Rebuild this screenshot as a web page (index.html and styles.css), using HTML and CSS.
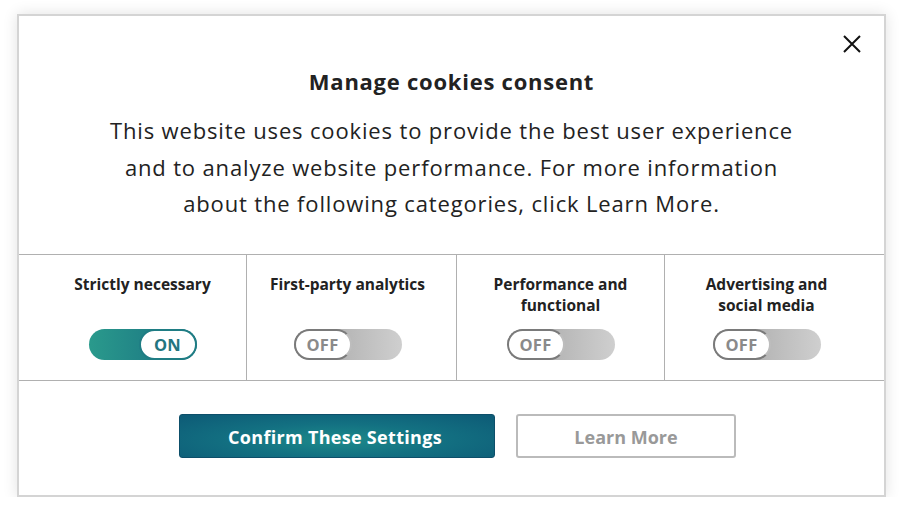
FILE: index.html
```html
<!DOCTYPE html>
<html lang="en">
<head>
<meta charset="utf-8">
<title>Manage cookies consent</title>
<link rel="stylesheet" href="styles.css">
</head>
<body>
<div class="modal">
  <section class="intro">
    <button class="close" aria-label="Close">
      <svg width="20" height="20" viewBox="0 0 20 20"><path d="M2 2 L18 18 M18 2 L2 18" stroke="#111" stroke-width="2" fill="none"/></svg>
    </button>
    <h1 class="title">Manage cookies consent</h1>
    <p class="desc">This website uses cookies to provide the best user experience<br>and to analyze website performance. For more information<br>about the following categories, click Learn More.</p>
  </section>
  <section class="cats">
    <div class="cat cat-1">
      <div class="label">Strictly necessary</div>
      <div class="toggle on"><span class="knob">ON</span></div>
    </div>
    <div class="cat cat-2">
      <div class="label">First-party analytics</div>
      <div class="toggle off"><span class="knob">OFF</span></div>
    </div>
    <div class="cat cat-3">
      <div class="label">Performance and<br>functional</div>
      <div class="toggle off"><span class="knob">OFF</span></div>
    </div>
    <div class="cat cat-4">
      <div class="label">Advertising and<br>social media</div>
      <div class="toggle off"><span class="knob">OFF</span></div>
    </div>
  </section>
  <section class="actions">
    <button class="btn primary">Confirm These Settings</button>
    <button class="btn secondary">Learn More</button>
  </section>
</div>
</body>
</html>
```

FILE: styles.css
```css
* { box-sizing: border-box; }
html, body { margin: 0; padding: 0; background: #ffffff; }
body {
  font-family: "Open Sans", Lato, "Liberation Sans", sans-serif;
  color: #222;
  padding: 14px 0 0 17px;
}
.modal {
  width: 869px;
  height: 483px;
  background: #fff;
  border: 2px solid #d4d4d4;
  box-shadow: 0 0 14px rgba(0,0,0,0.12);
  display: flex;
  flex-direction: column;
}
.intro {
  position: relative;
  height: 239px;
  padding-top: 50px;
  text-align: center;
  border-bottom: 1px solid #b0b0b0;
}
.close {
  position: absolute;
  top: 16px;
  right: 20px;
  width: 24px;
  height: 24px;
  padding: 2px;
  border: 0;
  background: none;
  cursor: pointer;
}
.title {
  margin: 0;
  font-size: 22px;
  line-height: 30px;
  font-weight: 700;
  letter-spacing: 0.75px;
  color: #222;
}
.desc {
  margin: 16px 0 0;
  font-size: 22px;
  line-height: 36.5px;
  letter-spacing: 0.85px;
  color: #222;
}
.cats {
  display: grid;
  grid-template-columns: 227px 210px 208px 1fr;
  height: 126px;
  border-bottom: 1px solid #b0b0b0;
}
.cat {
  display: flex;
  flex-direction: column;
  align-items: center;
  padding-top: 19px;
  border-left: 1px solid #b0b0b0;
}
.cat-1 { border-left: 0; padding-left: 20px; }
.cat-2 { padding-right: 8px; }
.cat-4 { padding-right: 16px; }
.label {
  height: 42px;
  font-size: 15.5px;
  line-height: 21px;
  font-weight: 700;
  text-align: center;
  color: #222;
}
.toggle {
  margin-top: 13px;
  width: 108px;
  height: 31px;
  border-radius: 16px;
  display: flex;
  overflow: hidden;
}
.knob {
  width: 58px;
  height: 31px;
  border-radius: 16px;
  background: #fff;
  display: flex;
  align-items: center;
  justify-content: center;
  font-size: 16.5px;
  font-weight: 700;
  letter-spacing: 0.3px;
}
.toggle.on {
  background: linear-gradient(90deg, #2a9a8c 0%, #1f7f85 60%, #1a6f80 100%);
  justify-content: flex-end;
}
.toggle.on .knob {
  border: 2px solid #1f7d84;
  color: #23757f;
}
.toggle.off {
  background: linear-gradient(90deg, #8f8f8f 0%, #b8b8b8 50%, #cfcfcf 100%);
  justify-content: flex-start;
}
.toggle.off .knob {
  border: 2px solid #7a7a7a;
  border-right-color: #bdbdbd;
  color: #8a8a8a;
}
.actions {
  flex: 1;
  display: flex;
  justify-content: center;
  align-items: flex-start;
  gap: 21px;
  padding-top: 33px;
  padding-left: 12px;
}
.btn {
  height: 44px;
  font-family: inherit;
  font-size: 18px;
  font-weight: 700;
  border-radius: 3px;
  cursor: pointer;
}
.primary {
  width: 316px;
  color: #fff;
  letter-spacing: 0.3px;
  padding-right: 10px;
  padding-top: 2px;
  border: 1px solid #0d4f6a;
  background: radial-gradient(ellipse at 50% 60%, #1d8a8a 0%, #137182 45%, #0d5a76 100%);
}
.secondary {
  width: 220px;
  color: #999;
  padding-top: 2px;
  background: #fff;
  border: 2px solid #bbb;
}
```
